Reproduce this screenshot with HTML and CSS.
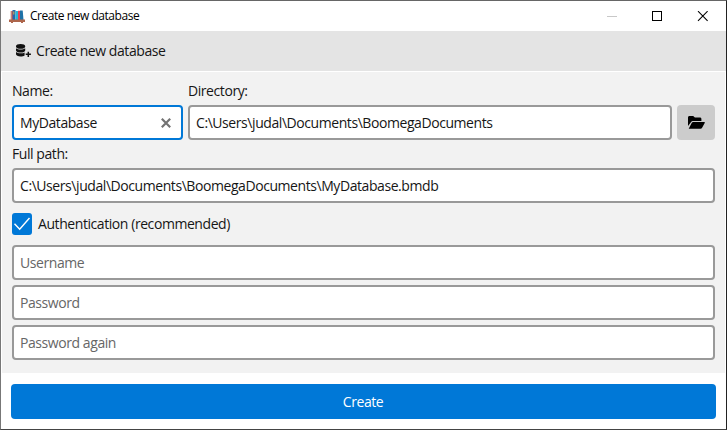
FILE: index.html
```html
<!DOCTYPE html>
<html lang="en">
<head>
<meta charset="utf-8">
<title>Create new database</title>
<link rel="stylesheet" href="styles.css">
</head>
<body>
<div class="window">
  <div class="titlebar">
    <svg class="app-icon" width="16" height="14" viewBox="0 0 16 14">
      <path fill="#d9534a" d="M2 1h2v9H2z"/><path fill="#c4aba2" d="M1.500 1h1v9h-1z"/>
      <path fill="#2467b0" d="M3.500 0h3v10h-3z"/><path fill="#25b5d9" d="M6.500 1h2.500v9H6.500z"/>
      <path fill="#e83e55" d="M9 .7h2V10H9z"/><path fill="#1e72a8" d="M11 .5h2.700l.8 9.500H11z"/><path fill="#e0b43c" d="M4.300 1.500h1v3h-1z"/>
      <path fill="#ad664c" d="M0 9.600h16V12H0zM2 12h2v1H2zM12 12h2v1h-2z"/>
    </svg>
    <span class="title">Create new database</span>
    <svg class="controls" width="102" height="12" viewBox="0 0 102 12" shape-rendering="crispEdges" fill="none">
      <path stroke="#c8c8c8" d="M0 5.500h10"/>
      <path stroke="#000" d="M45.500.5h9v9h-9z"/>
      <path stroke="#000" stroke-width="1.100" shape-rendering="auto" d="M91 .2l9.600 9.600M100.600.2L91 9.800"/>
    </svg>
  </div>
  <div class="header">
    <svg width="16" height="14" viewBox="0 0 16 14">
      <path fill="#111" d="M1 2.200C1 .9 3 0 5.600 0s4.600.9 4.600 2.200v.5c0 1.200-2 2.100-4.600 2.100S1 3.900 1 2.700zM1 4.200c1.100.9 2.700 1.300 4.600 1.300s3.500-.4 4.600-1.300v2.300c0 1.200-2 2.100-4.600 2.100S1 7.700 1 6.500zM1 8c1.100.9 2.700 1.300 4.600 1.300 1.600 0 3-.3 4-.9v3c-1 .7-2.400 1-4 1C3 12.400 1 11.500 1 10.300z"/>
      <path stroke="#111" stroke-width="1.500" d="M13.300 7.700v5.200M10.700 10.300h5.200"/>
    </svg>
    <span class="heading">Create new database</span>
  </div>
  <div class="content">
    <div class="row">
      <label class="name"><span class="label">Name:</span>
        <span class="field focused"><span>MyDatabase</span>
          <svg width="10" height="10" viewBox="0 0 10 10"><path stroke="#737373" stroke-width="2.200" d="M.8.8l8.400 8.400M9.200.8L.8 9.200"/></svg>
        </span></label>
      <label class="directory"><span class="label">Directory:</span>
        <span class="field"><span>C:\Users\judal\Documents\BoomegaDocuments</span></span></label>
      <div class="browse">
        <svg width="17" height="13" viewBox="0 0 17 13"><path fill="#000" d="M0 10V1.500C0 .6.600 0 1.500 0h3.700l1.700 1.600h5c.9 0 1.500.6 1.500 1.400v2H5.200c-1 0-1.800.4-2.300 1.300zM.7 12.700l3.100-5.900c.3-.6.800-.9 1.400-.9h10.900c.6 0 .9.500.6 1l-2.600 4.800c-.3.600-.9 1-1.600 1z"/></svg>
      </div>
    </div>
    <span class="label full-path">Full path:</span>
    <span class="field"><span>C:\Users\judal\Documents\BoomegaDocuments\MyDatabase.bmdb</span></span>
    <div class="auth">
      <span class="checkbox"><svg width="20" height="22" viewBox="0 0 20 22"><path fill="none" stroke="#fff" stroke-width="1.400" d="M2.500 10.800l5.200 5.500L17.500 5"/></svg></span>
      <span>Authentication (recommended)</span>
    </div>
    <div class="credentials">
      <span class="field hint"><span>Username</span></span>
      <span class="field hint"><span>Password</span></span>
      <span class="field hint"><span>Password again</span></span>
    </div>
  </div>
  <div class="footer"><div class="create"><span>Create</span></div></div>
</div>
</body>
</html>
```
FILE: styles.css
```css
* { box-sizing: border-box; }
body { margin: 0; font: 14px/20px "Open Sans", "Noto Sans", sans-serif; color: #161616; letter-spacing: -0.43px; }
svg { display: block; flex: none; }
span { white-space: nowrap; }
.window { width: 727px; height: 430px; background: #fff; border: 1px solid; border-color: #666 #222 #444 #777; display: flex; flex-direction: column; }
.titlebar { height: 30px; display: flex; align-items: center; padding-left: 8px; font-size: 12px; color: #000; }
.app-icon { margin-top: 1px; }
.title { margin-left: 5px; letter-spacing: -0.46px; }
.controls { margin: 1px 17px 0 auto; }
.header { height: 40px; background: #e4e4e4; display: flex; align-items: center; padding-left: 14px; gap: 5px; }
.content { height: 301px; margin: 1px 1px 0; background: #f2f2f2; padding: 9px 10px 0; }
.row { display: flex; gap: 5px; align-items: flex-end; }
.name { width: 171px; }
.directory { width: 484px; }
.label { display: block; height: 24px; }
.full-path { margin-top: 4px; }
.field { display: flex; align-items: center; justify-content: space-between; height: 35px; background: #fff; border: 2px solid #999; border-radius: 4px; padding: 1px 10px 0 6px; }
.focused { border-color: #0078d7; }
.hint { color: #666; }
.browse { width: 38px; height: 35px; border-radius: 4px; background: #ccc; display: flex; align-items: center; justify-content: center; }
.auth { display: flex; align-items: center; gap: 6px; margin-top: 10px; height: 22px; }
.checkbox { width: 20px; height: 22px; border-radius: 3px; background: #0078d7; }
.credentials { display: flex; flex-direction: column; gap: 5px; margin-top: 10px; }
.footer { padding: 11px 10px 0; }
.create { height: 35px; border-radius: 4px; background: #0078d7; color: #fff; display: flex; align-items: center; justify-content: center; padding: 1px 1px 0 0; }
```
